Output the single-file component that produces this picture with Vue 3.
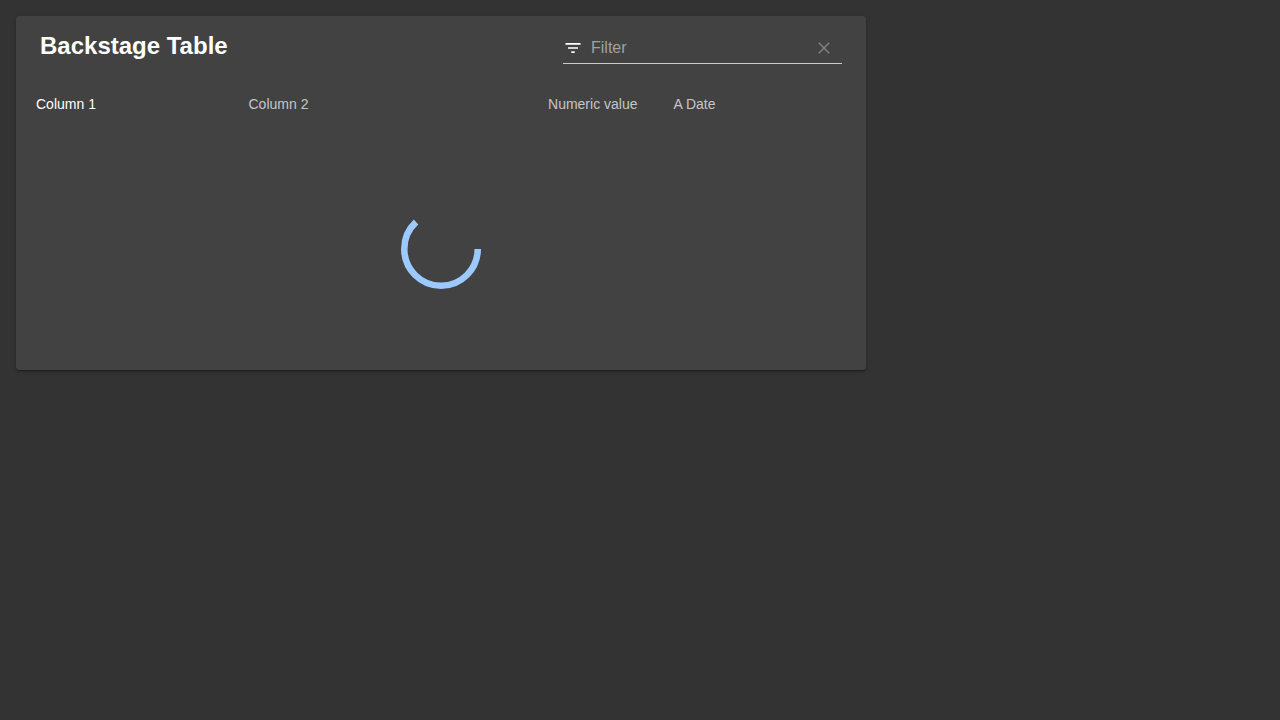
<script setup>
import { ref } from 'vue'

const columns = [
  { label: 'Column 1', kind: 'quarter', active: true },
  { label: 'Column 2', kind: 'wide' },
  { label: 'Numeric value', kind: 'fit' },
  { label: 'A Date', kind: 'quarter' },
]
const query = ref('')
</script>

<template>
  <main class="page">
    <section class="card">
      <header class="toolbar">
        <h1 class="title">Backstage Table</h1>
        <div class="filter">
          <svg class="icon" viewBox="0 0 24 24" aria-hidden="true">
            <path d="M10 18h4v-2h-4v2zM3 6v2h18V6H3zm3 7h12v-2H6v2z" />
          </svg>
          <input v-model="query" class="input" type="text" placeholder="Filter" aria-label="Filter" />
          <button class="clear" type="button" aria-label="Clear filter" :disabled="!query" @click="query = ''">
            <svg class="icon" viewBox="0 0 24 24" aria-hidden="true">
              <path d="M19 6.41L17.59 5 12 10.59 6.41 5 5 6.41 10.59 12 5 17.59 6.41 19 12 13.41 17.59 19 19 17.59 13.41 12z" />
            </svg>
          </button>
        </div>
      </header>
      <table class="table">
        <thead>
          <tr>
            <th v-for="c in columns" :key="c.label" scope="col" :class="['head', c.kind]">
              <button type="button" class="sort" :class="{ active: c.active }">{{ c.label }}</button>
            </th>
          </tr>
        </thead>
        <tbody>
          <tr>
            <td class="loading" :colspan="columns.length">
              <svg class="spinner" viewBox="22 22 44 44" role="progressbar" aria-label="Loading">
                <circle cx="44" cy="44" r="20.2" fill="none" stroke-width="3.6" stroke-dasharray="80 200" />
              </svg>
            </td>
          </tr>
        </tbody>
      </table>
    </section>
  </main>
</template>

<style>
body {
  margin: 0;
  background: #333;
}
</style>

<style scoped>
.page {
  padding: 16px;
  font-family: "Liberation Sans", Arial, sans-serif;
  color: #fff;
}
.card {
  max-width: 850px;
  border-radius: 4px;
  background: #424242;
  box-shadow: 0 3px 1px -2px rgba(0, 0, 0, 0.2), 0 2px 2px 0 rgba(0, 0, 0, 0.14), 0 1px 5px 0 rgba(0, 0, 0, 0.12);
}
.toolbar {
  display: flex;
  align-items: flex-start;
  justify-content: space-between;
  gap: 24px;
  min-height: 64px;
  box-sizing: border-box;
  padding: 16px 24px;
}
.title {
  margin: 0;
  font-size: 24px;
  line-height: 28px;
  font-weight: 700;
}
.filter {
  display: flex;
  align-items: center;
  flex: 0 1 279px;
  min-width: 0;
  height: 32px;
  box-sizing: border-box;
  padding-top: 1px;
  border-bottom: 1px solid #ccc;
}
.icon {
  display: block;
  flex: none;
  width: 20px;
  height: 20px;
  fill: currentColor;
}
.input {
  flex: 1;
  min-width: 0;
  height: 30px;
  margin-left: 8px;
  padding: 0;
  border: 0;
  outline: 0;
  background: none;
  color: #fff;
  font: inherit;
  font-size: 16px;
}
.input::placeholder {
  color: #a1a1a1;
  opacity: 1;
}
.clear {
  margin: 0 8px 0 0;
  padding: 0;
  border: 0;
  background: none;
  color: #fff;
}
.clear:disabled {
  color: #7b7b7b;
}
.table {
  width: 100%;
  border-collapse: collapse;
}
.head {
  padding: 14px 16px 14px 20px;
  text-align: left;
  white-space: nowrap;
}
.quarter {
  width: 25%;
}
.fit {
  width: 1%;
}
.sort {
  display: block;
  padding: 0;
  border: 0;
  background: none;
  color: #c6c6c6;
  font: inherit;
  font-weight: 400;
  font-size: 14px;
  line-height: 20px;
}
.sort.active {
  color: #fff;
}
.loading {
  padding: 81px 0;
}
.spinner {
  display: block;
  width: 80px;
  height: 80px;
  margin: 0 auto;
  stroke: #9cc9ff;
}
</style>
